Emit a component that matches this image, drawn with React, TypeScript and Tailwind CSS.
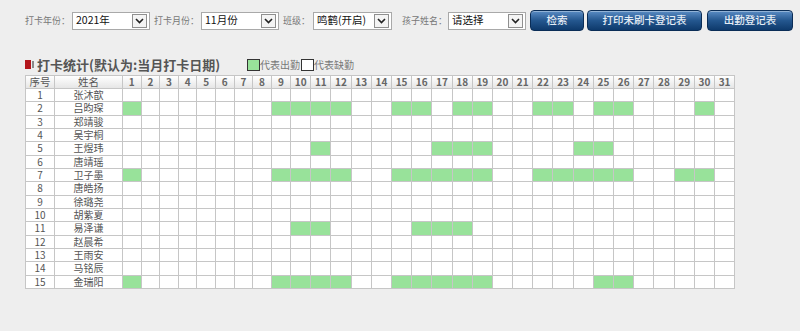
import React from "react";

const font = { fontFamily: '"Noto Sans CJK SC", "Noto Sans", sans-serif' };

type Student = { name: string; days: number[] };

const students: Student[] = [
  { name: "张沐歆", days: [] },
  { name: "吕昀琛", days: [1, 9, 10, 11, 12, 15, 16, 18, 19, 22, 23, 25, 26, 30] },
  { name: "郑靖骏", days: [] },
  { name: "吴宇桐", days: [] },
  { name: "王煜玮", days: [11, 17, 18, 19, 24, 25] },
  { name: "唐靖瑶", days: [] },
  { name: "卫子墨", days: [1, 9, 10, 11, 12, 15, 16, 17, 18, 19, 22, 23, 24, 25, 26, 29, 30] },
  { name: "唐皓扬", days: [] },
  { name: "徐璐尧", days: [] },
  { name: "胡紫夏", days: [] },
  { name: "易泽谦", days: [10, 11, 16, 17, 18] },
  { name: "赵晨希", days: [] },
  { name: "王雨安", days: [] },
  { name: "马铭辰", days: [] },
  { name: "金瑞阳", days: [1, 9, 10, 11, 12, 15, 16, 17, 18, 19, 25, 26] },
];

const days = Array.from({ length: 31 }, (_, i) => i + 1);

const dayWidth = (d: number) => (d < 9 ? 18.6 : d === 9 ? 19.3 : 20.2);

const Arrow = () => (
  <span className="flex h-[14px] w-[15px] items-center justify-center border border-[#8f8f8f] bg-[#f4f4f4]">
    <svg width="9" height="6" viewBox="0 0 9 6">
      <path d="M1 1 L4.5 4.5 L8 1" fill="none" stroke="#222" strokeWidth="1.6" />
    </svg>
  </span>
);

const FakeSelect = ({ value, width }: { value: string; width: string }) => (
  <div className={`flex h-[18px] ${width} items-center justify-between border border-[#a9a9a9] bg-white pl-[3px] pr-[2px]`}>
    <span className="text-[10.5px] leading-none text-[#111]">{value}</span>
    <Arrow />
  </div>
);

const Label = ({ text, className = "" }: { text: string; className?: string }) => (
  <span className={`text-[9px] leading-none text-[#777] ${className}`}>{text}</span>
);

const Button = ({ text, width, className = "" }: { text: string; width: string; className?: string }) => (
  <button
    className={`flex h-[21px] ${width} items-center justify-center rounded-[4px] border border-[#0a2d57] bg-linear-to-b from-[#5a8cc4] via-[#24578f] to-[#0e3a6c] text-[10.5px] font-medium leading-none text-[#e4ecf5] shadow-[inset_0_1px_0_rgba(255,255,255,0.35)] ${className}`}
  >
    {text}
  </button>
);

export default function App() {
  return (
    <div className="h-[331px] w-[800px] bg-[#eeeeee]" style={font}>
      <div className="flex items-center pl-[25px] pt-[10px]">
        <Label text="打卡年份：" />
        <div className="ml-[2px]"><FakeSelect value="2021年" width="w-[78px]" /></div>
        <Label text="打卡月份：" className="ml-[4px]" />
        <div className="ml-[2px]"><FakeSelect value="11月份" width="w-[78px]" /></div>
        <Label text="班级：" className="ml-[4px]" />
        <div className="ml-[3px]"><FakeSelect value="鸣鹤(开启)" width="w-[79px]" /></div>
        <Label text="孩子姓名：" className="ml-[10px]" />
        <div className="ml-[1px]"><FakeSelect value="请选择" width="w-[78px]" /></div>
        <Button text="检索" width="w-[54px]" className="ml-[4px]" />
        <Button text="打印未刷卡登记表" width="w-[115px]" className="ml-[3px]" />
        <Button text="出勤登记表" width="w-[86px]" className="ml-[5px]" />
      </div>

      <div className="mt-[27px] flex items-center pl-[25px]">
        <span className="h-[9px] w-[6px] bg-[#b3161c]" />
        <span className="ml-[1px] h-[7px] w-[2px] bg-[#8a8a8a]" />
        <span className="ml-[3px] text-[13px] font-bold leading-none text-[#555]">打卡统计(默认为:当月打卡日期)</span>
        <span className="ml-[27px] h-[12px] w-[13px] border border-[#333] bg-[#98e29a]" />
        <span className="text-[10px] leading-none text-[#777]">代表出勤</span>
        <span className="ml-[1px] h-[12px] w-[13px] border border-[#333] bg-white" />
        <span className="text-[10px] leading-none text-[#777]">代表缺勤</span>
      </div>

      <div className="pl-[25px] pt-[4px]">
        <table className="w-[710px] table-fixed border-collapse text-[10px] leading-none text-[#555]">
          <colgroup>
            <col style={{ width: 29 }} />
            <col style={{ width: 68 }} />
            {days.map((d) => (
              <col key={d} style={{ width: dayWidth(d) }} />
            ))}
          </colgroup>
          <thead>
            <tr className="h-[13px] bg-linear-to-b from-white to-[#e4e4e4]">
              <th className="border border-[#c6c6c6] p-0 text-[10.5px] font-normal">序号</th>
              <th className="border border-[#c6c6c6] p-0 text-[10.5px] font-normal">姓名</th>
              {days.map((d) => (
                <th key={d} className="border border-[#c6c6c6] p-0 text-[10px] font-bold text-[#666]">
                  {d}
                </th>
              ))}
            </tr>
          </thead>
          <tbody>
            {students.map((s, i) => (
              <tr key={s.name} className="h-[13.33px] bg-white">
                <td className="border border-[#c6c6c6] p-0 text-center">{i + 1}</td>
                <td className="border border-[#c6c6c6] p-0 text-center">{s.name}</td>
                {days.map((d) => (
                  <td
                    key={d}
                    className={`border border-[#c6c6c6] p-0 ${s.days.includes(d) ? "bg-[#98e29a]" : ""}`}
                  />
                ))}
              </tr>
            ))}
          </tbody>
        </table>
      </div>
    </div>
  );
}
